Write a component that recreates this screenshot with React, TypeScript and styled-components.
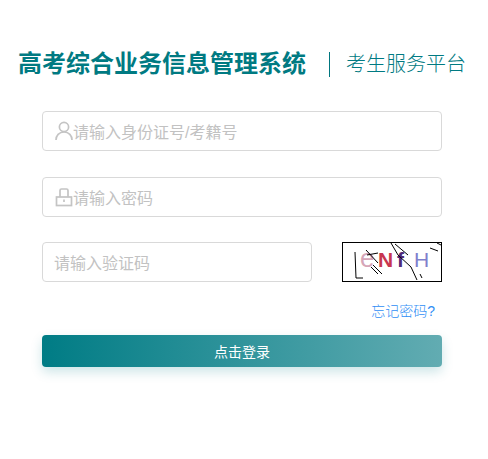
import React from 'react'
import styled, { createGlobalStyle } from 'styled-components'

const GlobalStyle = createGlobalStyle`
  html, body {
    margin: 0;
    padding: 0;
    background: #ffffff;
  }
  body {
    font-family: "Liberation Sans", "Noto Sans CJK SC", sans-serif;
  }
`

const Page = styled.div`
  width: 488px;
  height: 459px;
  padding-top: 48px;
  box-sizing: border-box;
  overflow: hidden;
`

const Header = styled.div`
  display: flex;
  align-items: center;
  height: 32px;
  padding-left: 18px;
  color: #007a82;
`

const Title = styled.div`
  font-size: 24px;
  font-weight: 700;
  line-height: 32px;
  white-space: nowrap;
`

const Divider = styled.div`
  width: 1px;
  height: 25px;
  margin: 1px 16px 0 23px;
  background: #00767f;
`

const SubTitle = styled.div`
  font-size: 20px;
  font-weight: 300;
  line-height: 32px;
  white-space: nowrap;
`

const Form = styled.form`
  width: 400px;
  margin: 31px 0 0 42px;
`

const Row = styled.div<{ $gap: number }>`
  display: flex;
  justify-content: space-between;
  margin-bottom: ${p => p.$gap}px;
`

const Field = styled.label<{ $short?: boolean }>`
  display: flex;
  align-items: center;
  width: ${p => (p.$short ? '270px' : '400px')};
  height: 40px;
  padding-left: ${p => (p.$short ? '11px' : '12px')};
  box-sizing: border-box;
  border: 1px solid #d9d9d9;
  border-radius: 4px;
  background: #fff;
`

const Input = styled.input`
  flex: 1;
  min-width: 0;
  border: 0;
  outline: 0;
  padding: 3px 0 0;
  font-family: inherit;
  font-size: 16px;
  color: #333;
  background: transparent;
  &::placeholder {
    color: #c2c2c2;
    opacity: 1;
  }
`

const FieldIcon = styled.svg`
  width: 18px;
  height: 20px;
  flex: none;
  fill: none;
  stroke: #c4c4c4;
  stroke-width: 1.7;
`

const Captcha = styled.svg`
  width: 100px;
  height: 40px;
  box-sizing: border-box;
  border: 1px solid #000;
  background: #fff;
`

const ForgotRow = styled.div`
  display: flex;
  justify-content: flex-end;
  padding-right: 7px;
  height: 16px;
  margin-bottom: 16px;
`

const Forgot = styled.a`
  font-size: 14px;
  font-weight: 300;
  line-height: 16px;
  color: #2f8ef5;
  cursor: pointer;
`

const Submit = styled.button`
  display: block;
  width: 400px;
  height: 32px;
  padding: 0;
  border: 0;
  border-radius: 4px;
  font-family: inherit;
  font-size: 14px;
  color: #fff;
  background: linear-gradient(to right, #007c85, #62acb2);
  box-shadow: 0 5px 12px rgba(0, 124, 133, 0.2);
  cursor: pointer;
`

const App = () => {
  return (
    <Page>
      <GlobalStyle />
      <Header>
        <Title>高考综合业务信息管理系统</Title>
        <Divider />
        <SubTitle>考生服务平台</SubTitle>
      </Header>
      <Form onSubmit={e => e.preventDefault()}>
        <Row $gap={26}>
          <Field>
            <FieldIcon viewBox="0 0 18 20">
              <circle cx="9" cy="6" r="4.6" />
              <path d="M1 19c0-4.5 3-8 8-8s8 3.500 8 8" />
            </FieldIcon>
            <Input placeholder="请输入身份证号/考籍号" />
          </Field>
        </Row>
        <Row $gap={25}>
          <Field>
            <FieldIcon viewBox="0 0 18 20">
              <path d="M5 10V3.500a1.500 1.500 0 0 1 1.500-1.500h5a1.500 1.500 0 0 1 1.500 1.500V10" />
              <rect x="1.500" y="10" width="15" height="8.500" />
              <path d="M9 12.500v2.500" />
            </FieldIcon>
            <Input placeholder="请输入密码" />
          </Field>
        </Row>
        <Row $gap={21}>
          <Field $short>
            <Input placeholder="请输入验证码" />
          </Field>
          <Captcha viewBox="0 0 98 38">
            <g fontFamily="Liberation Sans, sans-serif">
              <text x="17" y="24" fontSize="26" fill="#d6a6b8">e</text>
              <text x="35" y="24" fontSize="21" fontWeight="700" fill="#c8364f">N</text>
              <text x="54" y="24" fontSize="21" fontWeight="700" fill="#4f2a78">f</text>
              <text x="71" y="24" fontSize="21" fill="#8080cc">H</text>
            </g>
            <g stroke="#000" strokeWidth="1" fill="none">
              <path d="M12 9l1 26" />
              <path d="M23 7l12 13M24 12l11-2" />
              <path d="M30 22l9 9M28 24l7 7" />
              <path d="M48 0l7 12 13 12 6 13" />
              <path d="M52 1l13 11" />
              <path d="M87 5l8 3" />
              <path d="M13 35h7" />
              <path d="M77 31l2 4" />
              <path d="M94 0l4 2" />
            </g>
          </Captcha>
        </Row>
        <ForgotRow>
          <Forgot>忘记密码?</Forgot>
        </ForgotRow>
        <Submit type="submit">点击登录</Submit>
      </Form>
    </Page>
  )
}

export default App
